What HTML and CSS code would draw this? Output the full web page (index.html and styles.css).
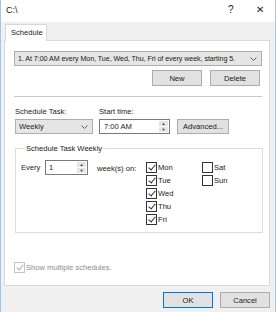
FILE: index.html
```html
<!DOCTYPE html>
<html lang="en">
<head>
  <meta charset="UTF-8">
  <title>C:\</title>
  <link rel="stylesheet" href="styles.css">
</head>
<body>

<div class="window">
  <!-- title bar -->
  <div class="titlebar">
    <span class="title">C:\</span>
    <span class="help">?</span>
    <span class="close">✕</span>
  </div>

  <!-- tabs -->
  <div class="tabs">
    <div class="tab">Schedule</div>
  </div>

  <div class="panel">
    <div class="combo wide">
      <span class="combo-text">1. At 7:00 AM every Mon, Tue, Wed, Thu, Fri of every week, starting 5.</span>
      <svg class="chev" width="7" height="4" viewBox="0 0 7 4"><path d="M0.5 0.5 L3.5 3.5 L6.5 0.5" fill="none" stroke="#606060" stroke-width="1"/></svg>
    </div>
    <div class="btn-row">
      <button class="btn">New</button>
      <button class="btn">Delete</button>
    </div>

    <div class="sep"></div>

    <div class="task-row">
      <div class="field">
        <label>Schedule Task:</label>
        <div class="combo task">
          <span class="combo-text">Weekly</span>
          <svg class="chev" width="7" height="4" viewBox="0 0 7 4"><path d="M0.5 0.5 L3.5 3.5 L6.5 0.5" fill="none" stroke="#606060" stroke-width="1"/></svg>
        </div>
      </div>
      <div class="field">
        <label>Start time:</label>
        <div class="spin-box time">
          <span>7:00 AM</span>
          <div class="spinner"><span>▲</span><span>▼</span></div>
        </div>
      </div>
      <button class="btn adv">Advanced...</button>
    </div>

    <fieldset class="group">
      <legend>Schedule Task Weekly</legend>
      <div class="weekly">
        <span class="every">Every</span>
        <div class="spin-box num">
          <span>1</span>
          <div class="spinner"><span>▲</span><span>▼</span></div>
        </div>
        <span class="weeks-on">week(s) on:</span>
        <div class="days">
          <label class="check checked"><i></i>Mon</label>
          <label class="check"><i></i>Sat</label>
          <label class="check checked"><i></i>Tue</label>
          <label class="check"><i></i>Sun</label>
          <label class="check checked"><i></i>Wed</label>
          <span></span>
          <label class="check checked"><i></i>Thu</label>
          <span></span>
          <label class="check checked"><i></i>Fri</label>
        </div>
      </div>
    </fieldset>

    <label class="check checked disabled multi"><i></i>Show multiple schedules.</label>
  </div>

  <div class="footer">
    <button class="btn ok">OK</button>
    <button class="btn">Cancel</button>
  </div>
</div>

</body>
</html>
```

FILE: styles.css
```css
* { box-sizing: border-box; }
body { margin: 0; font-family: "Liberation Sans", Arial, sans-serif; font-size: 7.6px; color: #1a1a1a; }

.window {
  width: 276px;
  height: 312px;
  background: #f0f0f0;
  border-left: 1px solid #9ec6ee;
  border-right: 1px solid #9ec6ee;
}

/* title bar */
.titlebar { height: 22px; background: #fff; display: flex; align-items: center; position: relative; }
.title { font-size: 9px; margin-left: 5px; margin-top: -2px; }
.help { position: absolute; left: 227px; top: 4px; font-size: 10px; }
.close { position: absolute; left: 255px; top: 4px; font-size: 10px; }

/* tabs */
.tabs { height: 18px; padding-left: 4px; display: flex; align-items: flex-end; }
.tab {
  width: 42px;
  height: 17px;
  background: #fff;
  border: 1px solid #d9d9d9;
  border-bottom: none;
  padding: 3px 0 0 5px;
  margin-bottom: -1px;
  position: relative;
}

.panel {
  margin-left: 3px;
  width: 266px;
  height: 246px;
  background: #fff;
  border: 1px solid #d9d9d9;
  padding: 10px 0 0 9px;
}

/* combo boxes */
.combo {
  display: flex;
  align-items: center;
  justify-content: space-between;
  background: #e5e5e5;
  border: 1px solid #adadad;
  height: 15px;
  padding: 0 4px 0 3px;
  white-space: nowrap;
  overflow: hidden;
}
.combo .combo-text { overflow: hidden; }
.combo.wide { width: 248px; }
.combo.wide .combo-text { font-size: 7.1px; letter-spacing: -0.05px; }
.combo.task { width: 78px; }
.chev { flex: none; margin-left: 3px; }

/* buttons */
.btn {
  font: inherit;
  color: #1a1a1a;
  background: #e1e1e1;
  border: 1px solid #adadad;
  height: 16px;
  width: 50px;
  padding: 0;
}
.btn.ok { border-color: #0078d7; }
.btn-row { display: flex; justify-content: flex-end; gap: 8px; width: 246px; margin-top: 4px; }

.sep { width: 248px; height: 1px; background: #c8c8c8; margin-top: 10px; }

/* task row */
.task-row { display: flex; align-items: flex-end; margin-top: 10px; padding-left: 1px; }
.field { display: flex; flex-direction: column; gap: 2px; margin-right: 6px; }
.field label { line-height: 10px; }
.btn.adv { width: 52px; height: 15px; margin-left: 1px; }

.spin-box {
  display: flex;
  align-items: center;
  justify-content: space-between;
  background: #fff;
  border: 1px solid #7a7a7a;
  height: 15px;
  padding: 0 1px 0 4px;
}
.spin-box.time { width: 71px; }
.spin-box.num { width: 43px; padding-left: 3px; }
.spinner { display: flex; flex-direction: column; width: 9px; height: 11px; gap: 1px; }
.spinner span {
  flex: 1;
  background: #e5e5e5;
  font-size: 4px;
  line-height: 5px;
  text-align: center;
  color: #333;
}

/* group box */
.group {
  margin: 10px 0 0 1px;
  width: 248px;
  height: 89px;
  border: 1px solid #dcdcdc;
  padding: 7px 0 0 5px;
}
.group legend { padding: 0 1px; margin-left: 4px; }
.weekly { display: flex; align-items: flex-start; }
.every { margin-top: 3px; width: 24px; }
.weeks-on { margin: 4px 0 0 9px; width: 49px; }
.days { display: grid; grid-template-columns: 56px 40px; row-gap: 2px; margin-top: 2px; }

/* checkboxes */
.check { display: flex; align-items: center; height: 11px; line-height: 11px; white-space: nowrap; }
.check i {
  width: 11px;
  height: 11px;
  border: 1px solid #333;
  background: #fff;
  margin-right: 1px;
  flex: none;
  position: relative;
}
.check.checked i::after {
  content: "";
  position: absolute;
  left: 3px;
  top: 0px;
  width: 3px;
  height: 6px;
  border: solid #333;
  border-width: 0 1px 1px 0;
  transform: rotate(40deg);
}
.check.disabled { color: #8c8c8c; }
.check.disabled i { border-color: #c4c4c4; }
.check.disabled i::after { border-color: #b0b0b0; }
.multi { margin-top: 29px; }

/* footer */
.footer { display: flex; justify-content: flex-end; gap: 7px; padding-right: 5px; margin-top: 6px; }
```
